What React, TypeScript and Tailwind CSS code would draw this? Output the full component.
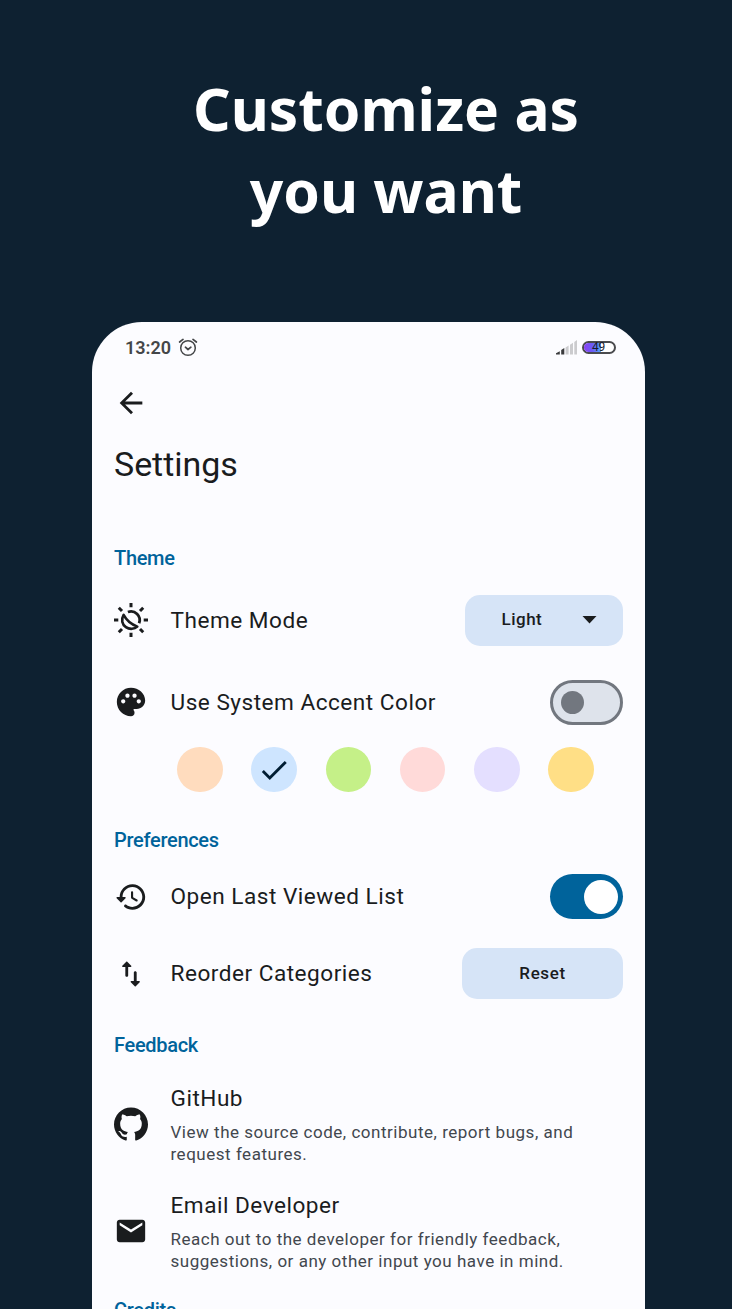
import React from "react";
import { SiGithub } from "react-icons/si";

const PALETTE =
  "M12 2C6.49 2 2 6.49 2 12s4.49 10 10 10c1.38 0 2.5-1.12 2.5-2.5 0-.61-.23-1.2-.64-1.67-.08-.1-.13-.21-.13-.33 0-.28.22-.5.5-.5H16c3.31 0 6-2.69 6-6 0-4.96-4.49-9-10-9zm5.5 11c-.83 0-1.5-.67-1.5-1.5s.67-1.5 1.5-1.5 1.5.67 1.5 1.5-.67 1.5-1.5 1.5zm-3-4c-.83 0-1.5-.67-1.5-1.5S13.67 6 14.5 6s1.5.67 1.5 1.5S15.33 9 14.5 9zM5 11.5c0-.83.67-1.5 1.5-1.5s1.5.67 1.5 1.5S7.33 13 6.5 13 5 12.33 5 11.5zm6-4c0 .83-.67 1.5-1.5 1.5S8 8.33 8 7.5 8.67 6 9.5 6s1.5.67 1.5 1.5z";
const HISTORY =
  "M13.26 3C8.17 2.86 4 6.95 4 12H2.21c-.45 0-.67.54-.35.85l2.79 2.8c.2.2.51.2.71 0l2.79-2.8c.31-.31.09-.85-.36-.85H6c0-3.9 3.18-7.05 7.1-7 3.72.05 6.85 3.18 6.9 6.9.05 3.91-3.1 7.1-7 7.1-1.61 0-3.1-.55-4.28-1.48-.4-.31-.96-.28-1.32.08-.42.42-.39 1.13.08 1.49C9 20.29 10.91 21 13 21c5.05 0 9.14-4.17 9-9.26-.13-4.69-4.05-8.61-8.74-8.74zm-.51 5c-.41 0-.75.34-.75.75v3.68c0 .35.19.68.49.86l3.12 1.85c.36.21.82.09 1.03-.26.21-.36.09-.82-.26-1.03l-2.88-1.71v-3.4c0-.4-.34-.74-.75-.74z";
const REORDER =
  "M8.65 3.35 5.86 6.14c-.32.31-.1.85.35.85H8V13c0 .55.45 1 1 1s1-.45 1-1V6.99h1.79c.45 0 .67-.54.35-.85L9.35 3.35c-.19-.19-.51-.19-.7 0zM16 17.01V11c0-.55-.45-1-1-1s-1 .45-1 1v6.01h-1.79c-.45 0-.67.54-.35.85l2.79 2.78c.2.19.51.19.71 0l2.79-2.78c.32-.31.09-.85-.35-.85H16z";
const MAIL =
  "M20 4H4c-1.1 0-2 .9-2 2v12c0 1.1.9 2 2 2h16c1.1 0 2-.9 2-2V6c0-1.1-.9-2-2-2zm0 4-8 5-8-5V6l8 5 8-5v2z";

function Glyph({ d, className = "" }: { d: string; className?: string }) {
  return (
    <svg viewBox="0 0 24 24" className={`size-[34px] shrink-0 fill-[#1a1c1e] ${className}`}>
      <path d={d} />
    </svg>
  );
}

function ThemeIcon() {
  return (
    <svg viewBox="0 0 34 34" className="size-[34px] shrink-0" fill="none" stroke="#1a1c1e" strokeWidth="3">
      <path d="M17 0v4.3M17 29.7V34M0 17h4.3M29.7 17H34M4.8 4.8l3.2 3.2M26 26l3.2 3.2M29.2 4.8l-3.2 3.2M8 26l-3.2 3.200" />
      <path d="M13.9 9A8.700 8.700 0 0 1 25.100 20.200" strokeWidth="2.8" />
      <path d="M9.6 11.900C6.900 16.400 8 21.600 11.900 24.200C15.600 26.700 20.500 26.200 23.300 23.600C17.500 21.400 12.600 17.600 9.600 11.900Z" strokeLinejoin="round" strokeWidth="2.6" />
    </svg>
  );
}

function AlarmIcon() {
  return (
    <svg viewBox="0 0 20 20" className="h-5 w-5" fill="none" stroke="#444648" strokeWidth="1.5" strokeLinecap="round">
      <circle cx="10" cy="11" r="7.3" />
      <path d="M1.6 5 5 2.4M18.4 5 15 2.4" strokeWidth="1.7" />
      <path d="m7.4 10.2 2.6 2.3 2.9-2.3" strokeLinejoin="round" strokeWidth="1.7" />
    </svg>
  );
}

function SignalIcon() {
  return (
    <svg viewBox="0 0 22 16" className="h-4 w-[22px]">
      <path d="M0 15.5v-1.2l3.8-2v3.2zM5.2 15.5v-4.5l3.1-1.9v6.4z" fill="#3a3b3d" />
      <path d="M9.6 15.5V8.4l3-1.9v9zM14 15.5V5.7l3-1.9v11.7zM18.3 15.5V2.9L21 1v14.5z" fill="#cbcbce" />
    </svg>
  );
}

function Section({ children, className }: { children: React.ReactNode; className: string }) {
  return (
    <div className={`flex items-center text-[20px] font-medium tracking-[-0.3px] text-[#00639b] ${className}`}>
      {children}
    </div>
  );
}

function Row({
  icon,
  label,
  className,
  children,
}: {
  icon: React.ReactNode;
  label: string;
  className: string;
  children: React.ReactNode;
}) {
  return (
    <div className={`flex items-center ${className}`}>
      {icon}
      <span className="ml-[22.5px] flex-1 pt-px text-[22.6px] tracking-[0.5px]">{label}</span>
      {children}
    </div>
  );
}

function LinkRow({ icon, title, lines }: { icon: React.ReactNode; title: string; lines: string[] }) {
  return (
    <div className="flex h-[107px] items-center">
      {icon}
      <div className="ml-[22.5px]">
        <div className="text-[22.6px] leading-[34px] tracking-[0.5px]">{title}</div>
        <div className="mt-[5px] text-[17px] leading-[22.5px] tracking-[0.52px] text-[#42474e]">
          {lines.map((line) => (
            <div key={line} className="whitespace-nowrap">{line}</div>
          ))}
        </div>
      </div>
    </div>
  );
}

const swatches = ["bg-[#ffdcbe]", "bg-[#cee5ff]", "bg-[#c5f088]", "bg-[#ffdad9]", "bg-[#e4dfff]", "bg-[#ffdf86]"];

export default function App() {
  return (
    <div className="flex h-[1309px] w-[732px] flex-col overflow-hidden bg-[#0e2131]">
      <h1 className="h-[322px] shrink-0 pt-[67px] pl-[40px] text-center font-['Noto_Sans',sans-serif] text-[58.7px] leading-[82px] font-bold text-white">
        Customize as
        <br />
        you want
      </h1>
      <main className="ml-[92px] h-[1100px] w-[553px] shrink-0 rounded-t-[50px] bg-[#fcfcff] px-[22px] font-['Roboto',sans-serif] text-[#1a1c1e]">
        <div className="flex h-[50px] items-center pr-[7px] pl-[11px]">
          <span className="text-[18px] font-semibold text-[#444648]">13:20</span>
          <span className="ml-[7px]"><AlarmIcon /></span>
          <span className="ml-auto"><SignalIcon /></span>
          <span className="ml-1 flex h-[13px] w-[34px] rounded-full border-2 border-[#4a4b4e] bg-white">
            <span className="flex w-[17px] items-center justify-end rounded-l-full bg-linear-to-r from-[#8a3ff5] via-[#6a5bf5] to-[#4fa5f5] text-[12px] leading-none tracking-[-0.3px] text-[#1a1c2e]">
              <span className="-mr-[4px]">49</span>
            </span>
          </span>
        </div>
        <div className="flex h-[61px] items-center">
          <Glyph d="M20 11H7.83l5.59-5.59L12 4l-8 8 8 8 1.41-1.41L7.83 13H20v-2z" />
        </div>
        <h2 className="flex h-[61px] items-center pt-px text-[34px] tracking-[-0.05px]">Settings</h2>
        <Section className="mt-[50px] h-7">Theme</Section>
        <Row icon={<ThemeIcon />} label="Theme Mode" className="-mt-px h-[98px]">
          <button className="flex h-[51px] w-[158px] items-center rounded-[15px] bg-[#d6e4f7] pl-[36.5px] text-[17px] font-medium tracking-[0.5px]">
            Light
            <svg viewBox="0 0 14 8" className="mr-[26px] ml-auto h-2 w-[15px] fill-[#1a1c1e]">
              <path d="M0 0h14L7 7.5z" />
            </svg>
          </button>
        </Row>
        <Row icon={<Glyph d={PALETTE} />} label="Use System Accent Color" className="h-[66px]">
          <span className="flex h-[45px] w-[73.5px] items-center rounded-full border-[3px] border-[#72777f] bg-[#dee3eb] pl-2">
            <span className="size-[23px] rounded-full bg-[#72777f]" />
          </span>
        </Row>
        <div className="flex h-[69px] items-center justify-between pr-[29px] pl-[63px]">
          {swatches.map((color, i) => (
            <span key={color} className={`flex size-[45.5px] items-center justify-center rounded-full ${color}`}>
              {i === 1 && (
                <svg viewBox="0 0 24 24" className="size-[34px] fill-[#001d33]">
                  <path d="M9 16.17 4.83 12l-1.42 1.41L9 19 21 7l-1.41-1.41z" />
                </svg>
              )}
            </span>
          ))}
        </div>
        <Section className="h-[72px]">Preferences</Section>
        <Row icon={<Glyph d={HISTORY} className="mt-px" />} label="Open Last Viewed List" className="-mt-[15px] h-[71px]">
          <span className="flex h-[45px] w-[73.5px] items-center justify-end rounded-full bg-[#00639b] pr-[5.5px]">
            <span className="size-[34px] rounded-full bg-white" />
          </span>
        </Row>
        <Row icon={<Glyph d={REORDER} />} label="Reorder Categories" className="h-[83px]">
          <button className="h-[51px] w-[161px] rounded-[15px] bg-[#d6e4f7] pt-px text-[17px] font-medium tracking-[0.6px]">
            Reset
          </button>
        </Row>
        <Section className="h-[60px]">Feedback</Section>
        <div className="-mt-[5px]">
          <LinkRow
            icon={<SiGithub className="size-[34px] shrink-0" />}
            title="GitHub"
            lines={["View the source code, contribute, report bugs, and", "request features."]}
          />
          <LinkRow
            icon={<Glyph d={MAIL} />}
            title="Email Developer"
            lines={["Reach out to the developer for friendly feedback,", "suggestions, or any other input you have in mind."]}
          />
        </div>
        <Section className="mt-[9px] h-[34px]">Credits</Section>
      </main>
    </div>
  );
}
